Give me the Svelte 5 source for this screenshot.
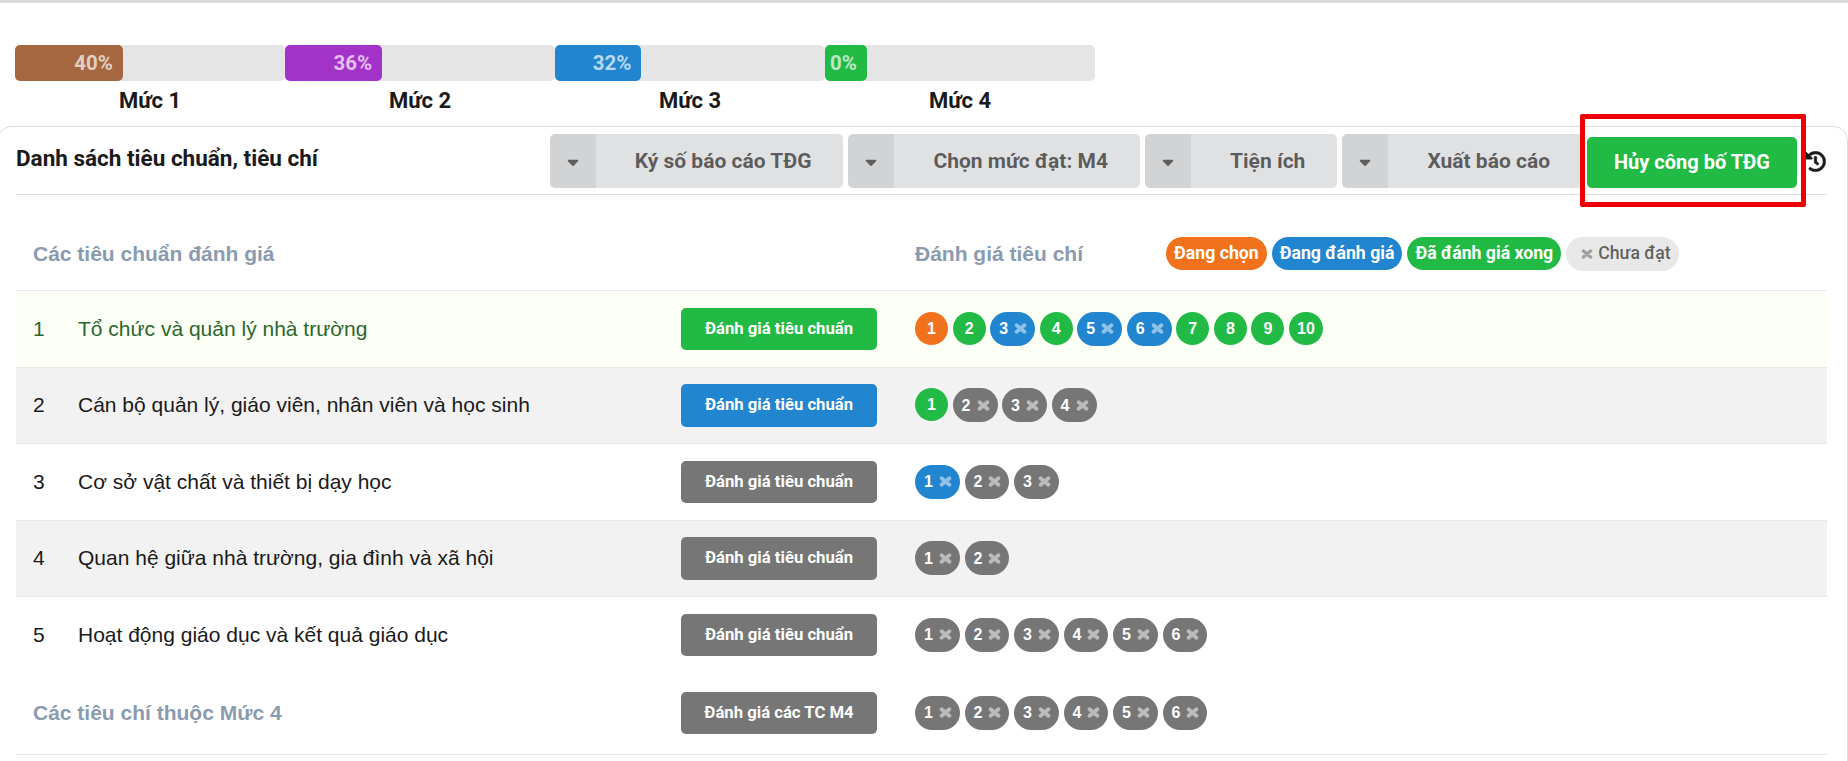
<script>
  const levels = [
    { pct: 40, name: 'Mức 1', color: '#a5673f' },
    { pct: 36, name: 'Mức 2', color: '#a333c8' },
    { pct: 32, name: 'Mức 3', color: '#2185d0' },
    { pct: 0, name: 'Mức 4', color: '#21ba45' }
  ];
  const menus = ['Ký số báo cáo TĐG', 'Chọn mức đạt: M4', 'Tiện ích', 'Xuất báo cáo'];
  const g = (n) => ({ n, c: 'grey', x: true });
  const rows = [
    { no: 1, name: 'Tổ chức và quản lý nhà trường', tone: 'pos', btn: 'green', label: 'Đánh giá tiêu chuẩn',
      items: [{ n: 1, c: 'orange' }, { n: 2, c: 'green' }, { n: 3, c: 'blue', x: true }, { n: 4, c: 'green' }, { n: 5, c: 'blue', x: true }, { n: 6, c: 'blue', x: true }, { n: 7, c: 'green' }, { n: 8, c: 'green' }, { n: 9, c: 'green' }, { n: 10, c: 'green' }] },
    { no: 2, name: 'Cán bộ quản lý, giáo viên, nhân viên và học sinh', tone: 'alt', btn: 'blue', label: 'Đánh giá tiêu chuẩn',
      items: [{ n: 1, c: 'green' }, g(2), g(3), g(4)] },
    { no: 3, name: 'Cơ sở vật chất và thiết bị dạy học', tone: '', btn: 'grey', label: 'Đánh giá tiêu chuẩn',
      items: [{ n: 1, c: 'blue', x: true }, g(2), g(3)] },
    { no: 4, name: 'Quan hệ giữa nhà trường, gia đình và xã hội', tone: 'alt', btn: 'grey', label: 'Đánh giá tiêu chuẩn',
      items: [g(1), g(2)] },
    { no: 5, name: 'Hoạt động giáo dục và kết quả giáo dục', tone: 'plain', btn: 'grey', label: 'Đánh giá tiêu chuẩn',
      items: [g(1), g(2), g(3), g(4), g(5), g(6)] }
  ];
  const m4 = [g(1), g(2), g(3), g(4), g(5), g(6)];
</script>

{#snippet cross()}
  <svg class="cross" viewBox="0 0 13 11" aria-hidden="true"><path d="M2.6 2.2 L10.4 8.8 M10.4 2.2 L2.6 8.8"/></svg>
{/snippet}

{#snippet badges(items)}
  <div class="badges">
    {#each items as b}
      <span class="badge {b.c}" class:closable={b.x}>{b.n}{#if b.x}{@render cross()}{/if}</span>
    {/each}
  </div>
{/snippet}

<div class="page">
  <div class="levels">
    {#each levels as l}
      <div class="level">
        <div class="track">
          <div class="fill" style="width:{l.pct}%;background:{l.color}">{l.pct}%</div>
        </div>
        <div class="level-name">{l.name}</div>
      </div>
    {/each}
  </div>

  <section class="card">
    <header class="head">
      <h2>Danh sách tiêu chuẩn, tiêu chí</h2>
      <div class="actions">
        {#each menus as m}
          <button class="menu">
            <span class="caret"><svg viewBox="0 0 320 512" aria-hidden="true"><path d="M41 288h238c21.4 0 32.1 25.9 17 41L177 448c-9.4 9.4-24.6 9.4-33.9 0L24 329c-15.1-15.1-4.4-41 17-41z"/></svg></span>
            <span class="menu-label">{m}</span>
          </button>
        {/each}
        <div class="publish-wrap">
          <button class="publish">Hủy công bố TĐG</button>
          <span class="mark"></span>
        </div>
        <svg class="history" viewBox="0 0 512 512" aria-hidden="true"><path d="M504 255.531c.253 136.64-111.18 248.372-247.82 248.468-59.015.042-113.223-20.53-155.822-54.911-11.077-8.94-11.905-25.541-1.839-35.607l11.267-11.267c8.609-8.609 22.353-9.551 31.891-1.984C173.062 425.135 212.781 440 256 440c101.705 0 184-82.311 184-184 0-101.705-82.311-184-184-184-48.814 0-93.149 18.969-126.068 49.932l50.754 50.754c10.08 10.08 2.941 27.314-11.313 27.314H24c-8.837 0-16-7.163-16-16V38.627c0-14.254 17.234-21.393 27.314-11.314l49.372 49.372C129.209 34.136 189.552 8 256 8c136.81 0 247.747 110.78 248 247.531zm-180.912 78.784l9.823-12.63c8.138-10.463 6.253-25.542-4.21-33.679L288 256.349V152c0-13.255-10.745-24-24-24h-16c-13.255 0-24 10.745-24 24v135.651l65.409 50.874c10.463 8.137 25.541 6.253 33.679-4.21z"/></svg>
      </div>
    </header>

    <div class="row title-row">
      <div class="section-title wide">Các tiêu chuẩn đánh giá</div>
      <div class="legend-cell">
        <div class="section-title">Đánh giá tiêu chí</div>
        <div class="legend">
          <span class="pill orange">Đang chọn</span>
          <span class="pill blue">Đang đánh giá</span>
          <span class="pill green">Đã đánh giá xong</span>
          <span class="pill muted">{@render cross()}Chưa đạt</span>
        </div>
      </div>
    </div>

    {#each rows as r}
      <div class="row item {r.tone}">
        <div class="no">{r.no}</div>
        <div class="name">{r.name}</div>
        <button class="act {r.btn}">{r.label}</button>
        {@render badges(r.items)}
      </div>
    {/each}

    <div class="row item last">
      <div class="section-title wide">Các tiêu chí thuộc Mức 4</div>
      <button class="act grey">Đánh giá các TC M4</button>
      {@render badges(m4)}
    </div>
  </section>
</div>

<style>
  :global(body) { margin: 0; background: #fff; }
  .page {
    width: 1848px;
    height: 761px;
    overflow: hidden;
    border-top: 3px solid #dcdcdc;
    box-sizing: border-box;
    font-family: "Liberation Sans", Arial, sans-serif;
    color: #1a1a1a;
  }
  .levels { display: flex; padding: 42px 0 0 15px; }
  .level { width: 270px; }
  .track { height: 36px; background: #e5e5e5; border-radius: 5px; }
  .fill {
    height: 36px;
    min-width: 42px;
    box-sizing: border-box;
    border-radius: 5px;
    text-align: right;
    padding-right: 10px;
    font: 700 20.5px/36px Roboto, sans-serif;
    color: rgba(255, 255, 255, .7);
  }
  .level-name {
    text-align: center;
    font: 700 22px/20px Roboto, sans-serif;
    margin-top: 10px;
    color: #1a1a1a;
  }
  .card {
    margin: 15px 0 0 -3px;
    width: 1851px;
    box-sizing: border-box;
    padding: 0 20px 0 18px;
    border: 1px solid #dedede;
    border-bottom: 0;
    border-radius: 15px 15px 0 0;
    height: 700px;
  }
  .head {
    display: flex;
    justify-content: space-between;
    height: 68px;
    box-sizing: border-box;
    border-bottom: 1px solid #dedede;
  }
  h2 {
    margin: 14px 0 0;
    font: 700 22.5px/34px Roboto, sans-serif;
    color: #1a1a1a;
  }
  .actions { display: flex; align-items: flex-start; padding-top: 7px; position: relative; }
  button { border: 0; padding: 0; margin: 0; cursor: pointer; }
  .menu {
    display: flex;
    height: 54px;
    margin-right: 5px;
    background: #e0e1e2;
    color: rgba(0, 0, 0, .6);
    border-radius: 5px;
    overflow: hidden;
    font: 700 21px/54px Roboto, sans-serif;
  }
  .caret {
    width: 46px;
    background: rgba(0, 0, 0, .06);
    display: flex;
    align-items: center;
    justify-content: center;
  }
  .caret svg { width: 12px; height: 19px; fill: rgba(0, 0, 0, .55); transform: translateY(-3px); }
  .menu-label { padding: 0 32px 0 39px; white-space: nowrap; }
  .publish-wrap { position: relative; }
  .publish {
    display: block;
    width: 210px;
    height: 51px;
    margin-top: 3px;
    background: #21ba45;
    color: #fff;
    border-radius: 5px;
    font: 700 20px/51px Roboto, sans-serif;
  }
  .mark {
    position: absolute;
    left: -7px;
    top: -20px;
    width: 226px;
    height: 93px;
    box-sizing: border-box;
    border: 5px solid #ee0000;
    border-radius: 2px;
    pointer-events: none;
  }
  .history { width: 21px; height: 21px; margin: 17px 1px 0 8px; fill: #1a1a1a; stroke: #1a1a1a; stroke-width: 10; }

  .row {
    display: grid;
    grid-template-columns: 45px 603px 196px 1fr;
    column-gap: 0;
    align-items: center;
    padding-left: 17px;
    border-bottom: 1px solid #e7e7e7;
    box-sizing: border-box;
  }
  .title-row { height: 96px; grid-template-columns: 882px 1fr; padding-top: 22px; }
  .section-title { font: 700 21px/24px "Liberation Sans", sans-serif; color: #8a9bb0; white-space: nowrap; }
  .wide { grid-column: span 2; }
  .title-row .wide { grid-column: auto; }
  .legend-cell { display: flex; align-items: center; }
  .legend { display: flex; gap: 5px; margin-left: 83px; }
  .pill {
    display: flex;
    align-items: center;
    height: 33px;
    padding: 0 8px;
    border-radius: 17px;
    color: #fff;
    font: 700 17.7px/33px Roboto, sans-serif;
  }
  .pill.muted { background: #e8e8e8; color: rgba(0,0,0,.6); font-weight: 500; height: 34px; padding: 0 8px 0 15px; }
  .pill .cross { stroke: #000; opacity: .3; width: 12px; height: 10px; margin: 0 5px 0 0; }
  .orange { background: #f2711c; }
  .blue { background: #2185d0; }
  .green { background: #21ba45; }
  .grey { background: #767676; }

  .item { height: 76.5px; font-size: 21px; }
  .item.pos { background: #fcfff5; color: #2c662d; }
  .item.alt { background: #f2f2f2; }
  .item.plain { border-bottom: 0; height: 75.5px; }
  .item.last { border-bottom: 1px solid #e7e7e7; height: 82.5px; padding-bottom: 1px; }
  .no, .name { line-height: 24px; }
  .act {
    grid-column: 3;
    height: 42.5px;
    width: 196px;
    color: #fff;
    border-radius: 5px;
    font: 700 16.7px/42px Roboto, sans-serif;
  }
  .badges { display: flex; padding-left: 38px; column-gap: 4.6px; }
  .badge {
    box-sizing: border-box;
    display: flex;
    align-items: center;
    justify-content: center;
    min-width: 33px;
    height: 33px;
    padding: 0 8px;
    border-radius: 17px;
    color: #fff;
    font: 700 16px/33px "Liberation Sans", sans-serif;
  }
  .badge.closable { padding: 0 8px 0 9px; height: 34px; }
  .cross { width: 13px; height: 11px; margin-left: 6px; fill: none; stroke: #fff; stroke-width: 3.8; stroke-linecap: round; opacity: .5; flex: none; }
</style>
